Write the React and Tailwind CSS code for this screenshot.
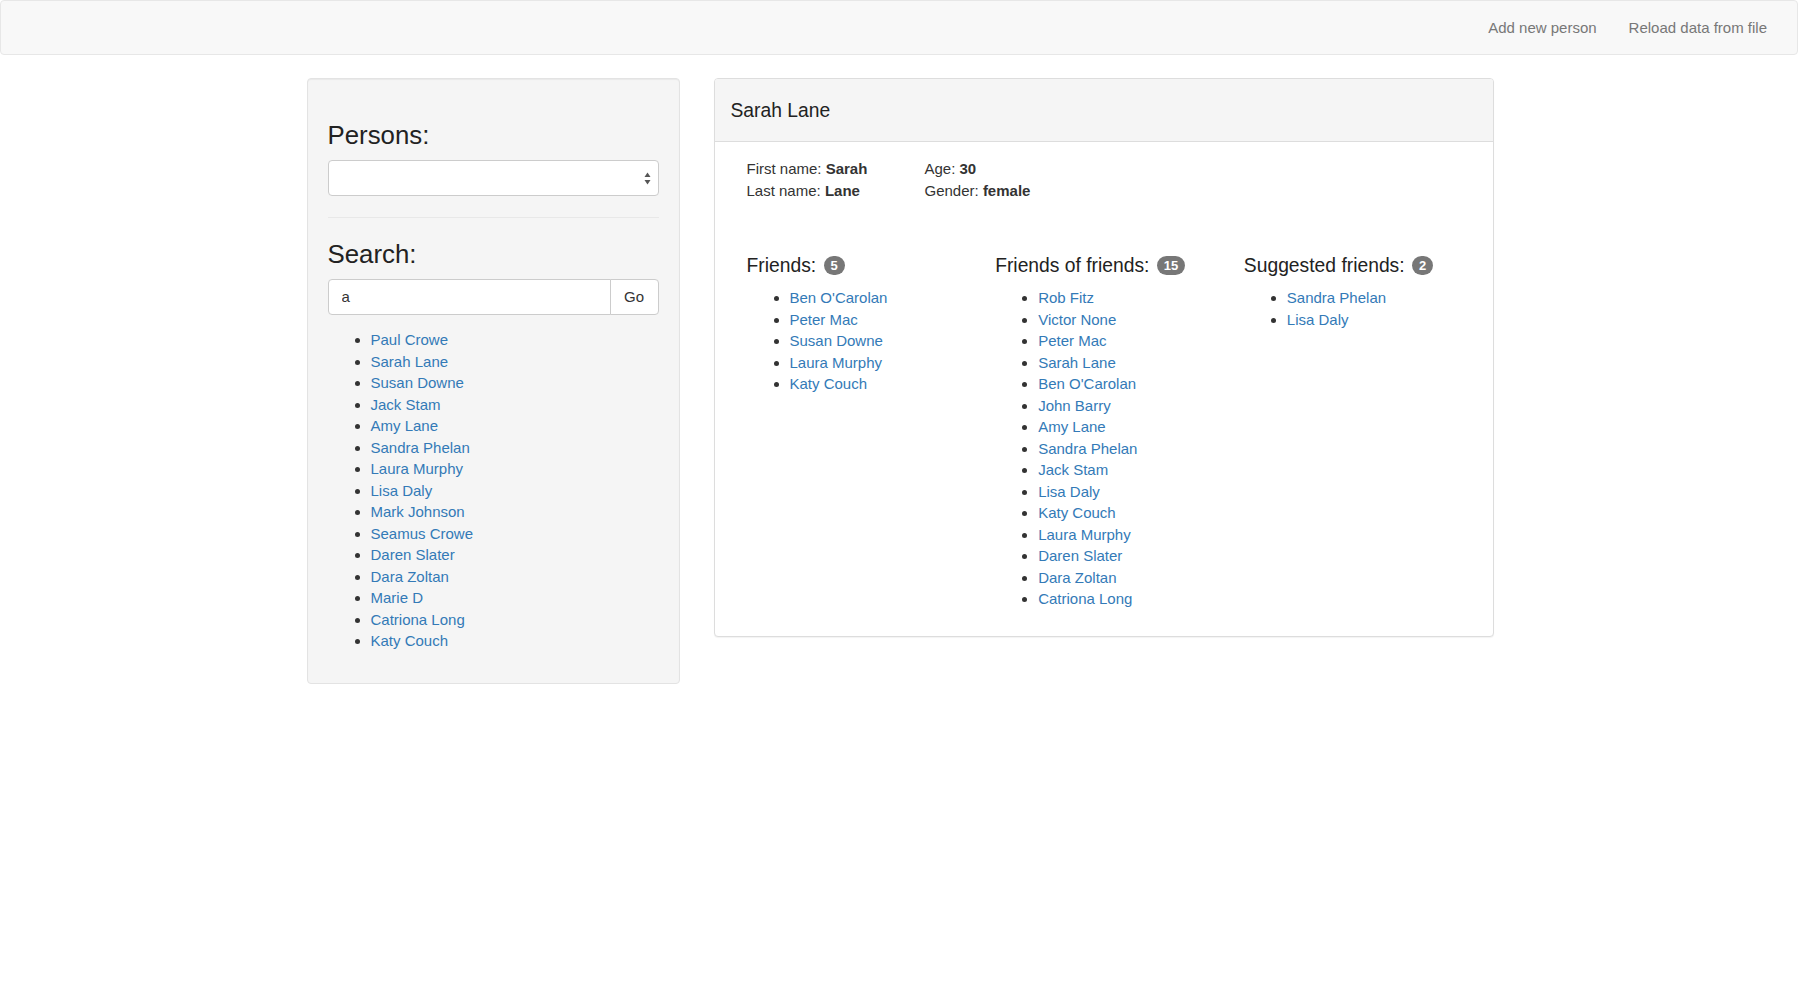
import React, { useState } from 'react';

const allPersons = [
  'Paul Crowe',
  'Sarah Lane',
  'Susan Downe',
  'Jack Stam',
  'Amy Lane',
  'Sandra Phelan',
  'Laura Murphy',
  'Lisa Daly',
  'Mark Johnson',
  'Seamus Crowe',
  'Daren Slater',
  'Dara Zoltan',
  'Marie D',
  'Catriona Long',
  'Katy Couch',
];

const friends = ["Ben O'Carolan", 'Peter Mac', 'Susan Downe', 'Laura Murphy', 'Katy Couch'];

const friendsOfFriends = [
  'Rob Fitz',
  'Victor None',
  'Peter Mac',
  'Sarah Lane',
  "Ben O'Carolan",
  'John Barry',
  'Amy Lane',
  'Sandra Phelan',
  'Jack Stam',
  'Lisa Daly',
  'Katy Couch',
  'Laura Murphy',
  'Daren Slater',
  'Dara Zoltan',
  'Catriona Long',
];

const suggested = ['Sandra Phelan', 'Lisa Daly'];

// plain bulleted list of person links
const PersonList = ({ names, className = '' }) => (
  <ul className={`list-disc pl-[43px] ${className}`}>
    {names.map((name, i) => (
      <li key={i}>
        <a href="#" className="text-[#337ab7] no-underline hover:underline">
          {name}
        </a>
      </li>
    ))}
  </ul>
);

const Badge = ({ count }) => (
  <span className="relative -top-[1px] ml-[2px] inline-block rounded-[10px] bg-[#777] px-[7px] py-[3px] align-middle text-[13px] font-bold leading-none text-white">
    {count}
  </span>
);

const FriendColumn = ({ title, names }) => (
  <div className="px-[16px]">
    <h4 className="mb-[10.7px] text-[19.3px] leading-[21.2px] text-[#222]">
      {title} <Badge count={names.length} />
    </h4>
    <PersonList names={names} className="mb-[10.7px]" />
  </div>
);

const App = () => {
  const [query, setQuery] = useState('a');

  return (
    <div className="min-h-screen bg-white font-['Liberation_Sans',Arial,sans-serif] text-[15px] leading-[21.5px] text-[#333]">
      <nav className="mr-[2px] flex h-[55px] items-center justify-end rounded-[4px] border border-[#e7e7e7] bg-[#f8f8f8] pr-[14px]">
        <a href="#" className="px-[16px] text-[#777]">Add new person</a>
        <a href="#" className="px-[16px] text-[#777]">Reload data from file</a>
      </nav>

      <div className="mx-auto mt-[23px] flex w-[1187px] items-start gap-[34px]">
        {/* left column: persons + search */}
        <div className="w-[373px] rounded-[4px] border border-[#e3e3e3] bg-[#f5f5f5] px-[20px] pt-[20px] pb-[21px] shadow-[inset_0_1px_1px_rgba(0,0,0,0.05)]">
          <h3 className="mt-[21.5px] mb-[10.7px] text-[25.8px] leading-[28.4px] text-[#222]">Persons:</h3>
          <div className="relative h-[36px] rounded-[4px] border border-[#ccc] bg-white">
            <svg className="absolute right-[7px] top-[11px]" width="7" height="13" viewBox="0 0 7 13">
              <path d="M3.5 0.5 L6.5 5 L0.5 5 Z" fill="#555" />
              <path d="M3.5 12.5 L6.5 8 L0.5 8 Z" fill="#555" />
            </svg>
          </div>

          <hr className="my-[21.5px] border-t border-[#e8e8e8]" />

          <h3 className="mt-[21.5px] mb-[10.7px] text-[25.8px] leading-[28.4px] text-[#222]">Search:</h3>
          <div className="flex h-[36px]">
            <input
              value={query}
              onChange={(e) => setQuery(e.target.value)}
              className="min-w-0 flex-1 rounded-l-[4px] border border-[#ccc] bg-white px-[13px] text-[15px] text-[#333] outline-none"
            />
            <button className="-ml-px w-[49px] rounded-r-[4px] border border-[#ccc] bg-white text-[15px] text-[#333]">
              Go
            </button>
          </div>

          <PersonList names={allPersons} className="mt-[14.6px] mb-[10.7px]" />
        </div>

        {/* right column: selected person */}
        <div className="w-[780px] rounded-[4px] border border-[#ddd] bg-white shadow-[0_1px_1px_rgba(0,0,0,0.05)]">
          <div className="flex h-[63px] items-center rounded-t-[3px] border-b border-[#ddd] bg-[#f5f5f5] px-[16px] pt-[2px]">
            <h3 className="text-[19.3px] leading-[21.2px] text-[#222]">Sarah Lane</h3>
          </div>
          <div className="p-[16px]">
            <div className="flex px-[16px]">
              <div className="w-[178px]">
                <div>First name: <b>Sarah</b></div>
                <div>Last name: <b>Lane</b></div>
              </div>
              <div>
                <div>Age: <b>30</b></div>
                <div>Gender: <b>female</b></div>
              </div>
            </div>

            <div className="mt-[54px] grid grid-cols-3">
              <FriendColumn title="Friends:" names={friends} />
              <FriendColumn title="Friends of friends:" names={friendsOfFriends} />
              <FriendColumn title="Suggested friends:" names={suggested} />
            </div>
          </div>
        </div>
      </div>
    </div>
  );
};

export default App;
